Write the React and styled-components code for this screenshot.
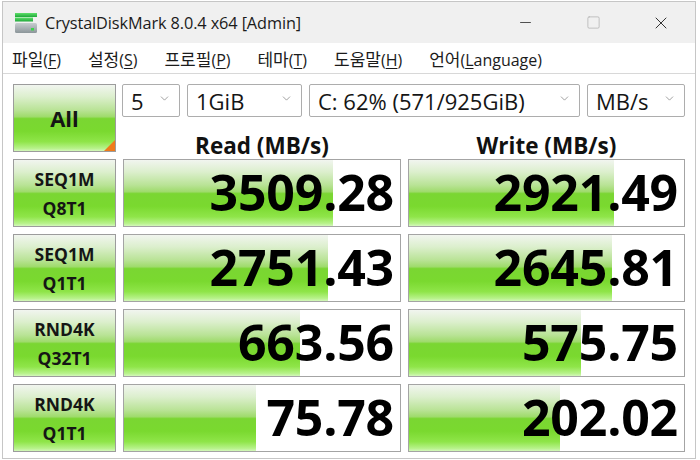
import React from 'react';
import styled, { createGlobalStyle } from 'styled-components';
import { ChevronDown, Minus, Square, X } from 'lucide-react';

const GlobalStyle = createGlobalStyle`
	html, body {
		margin: 0;
		padding: 0;
		background: #ffffff;
	}
	body {
		font-family: 'Open Sans', 'Noto Sans CJK KR', sans-serif;
		color: #111;
	}
`;

const green = `linear-gradient(to bottom,
	#f1f5ef 0%,
	#dcefcd 18%,
	#b9e396 38%,
	#9fdb6c 48%,
	#7ad632 51%,
	#7ad92f 70%,
	#8fe549 86%,
	#b7f28a 96%,
	#d3f7bb 100%)`;

const Window = styled.div`
	box-sizing: border-box;
	width: 694px;
	height: 458px;
	margin: 1px 0 0 2px;
	border: 1px solid #c6c6c6;
	display: flex;
	flex-direction: column;
	overflow: hidden;
`;

const TitleBar = styled.div`
	height: 41px;
	background: #f0f0f0;
	display: flex;
	align-items: center;
	padding-left: 10px;
	font-size: 16.3px;
	color: #1b1b1b;
`;

const TitleText = styled.span`
	margin-left: 6px;
	flex: 1;
	letter-spacing: -0.1px;
`;

const WinButton = styled.div`
	width: 68px;
	height: 40px;
	display: flex;
	align-items: center;
	justify-content: center;
	color: ${(p) => (p.dim ? '#b0b0b0' : '#333')};
`;

const MenuBar = styled.div`
	height: 30px;
	display: flex;
	align-items: center;
	gap: 27px;
	padding-left: 9px;
	border-bottom: 1px solid #d8d8d8;
	background: #fff;
	font-size: 17px;
	color: #1b1b1b;
`;

const MenuItem = styled.span`
	white-space: nowrap;
`;

const Mnemonic = styled.span`
	font-size: 16px;
	u {
		text-underline-offset: 2px;
	}
`;

const Content = styled.div`
	flex: 1;
	padding: 10px 8px 0 10px;
	display: grid;
	grid-template-columns: 103px 278px 277px;
	grid-template-rows: 68px 68px 68px 68px 68px;
	column-gap: 7px;
	row-gap: 7px;
`;

const GreenBox = styled.div`
	box-sizing: border-box;
	border: 1px solid #9c9c9c;
	background: ${green};
	display: flex;
	flex-direction: column;
	align-items: center;
	justify-content: center;
	font-weight: 700;
	color: #151515;
	position: relative;
`;

const AllButton = styled(GreenBox)`
	font-size: 22px;
	&::after {
		content: '';
		position: absolute;
		right: 0;
		bottom: 0;
		border-style: solid;
		border-width: 0 0 11px 11px;
		border-color: transparent transparent #f07a1a transparent;
	}
`;

const TestLabel = styled(GreenBox)`
	font-size: 17.5px;
	line-height: 29px;
	padding-top: 1px;
`;

const TopRight = styled.div`
	grid-column: 2 / 4;
	display: flex;
	flex-direction: column;
`;

const SelectRow = styled.div`
	display: flex;
	gap: 7px;
	margin-left: -1px;
	height: 33px;
`;

const Select = styled.div`
	box-sizing: border-box;
	width: ${(p) => p.w}px;
	height: 33px;
	border: 1px solid #adadad;
	border-radius: 2px;
	background: #fff;
	display: flex;
	align-items: center;
	justify-content: space-between;
	padding: 0 8px 0 8px;
	font-size: 22px;
	color: #151515;
	svg {
		color: #7a7a7a;
		margin-top: -4px;
		flex-shrink: 0;
	}
`;

const HeaderRow = styled.div`
	flex: 1;
	display: grid;
	grid-template-columns: 278px 277px;
	column-gap: 7px;
	align-items: center;
	padding-top: 13px;
`;

const Header = styled.div`
	text-align: center;
	font-weight: 700;
	font-size: 22.5px;
	color: #111;
`;

const ResultBox = styled.div`
	box-sizing: border-box;
	border: 1px solid #a4a4a4;
	background: #fff;
	position: relative;
	display: flex;
	align-items: center;
	justify-content: flex-end;
	overflow: hidden;
`;

const Bar = styled.div`
	position: absolute;
	left: 0;
	top: 0;
	bottom: 0;
	background: ${green};
`;

const Value = styled.span`
	position: relative;
	font-weight: 700;
	font-size: 50px;
	letter-spacing: -0.2px;
	color: #000;
	padding-right: 6px;
	margin-top: -2px;
`;

const DriveIcon = () => (
	<svg width="26" height="24" viewBox="0 0 26 24">
		<defs>
			<linearGradient id="gtop" x1="0" y1="0" x2="0" y2="1">
				<stop offset="0" stopColor="#5fe06a" />
				<stop offset="1" stopColor="#1fa83a" />
			</linearGradient>
			<linearGradient id="gbody" x1="0" y1="0" x2="0" y2="1">
				<stop offset="0" stopColor="#c7cdd0" />
				<stop offset="1" stopColor="#8c969a" />
			</linearGradient>
		</defs>
		<rect x="2" y="2" width="22" height="4" fill="url(#gtop)" />
		<rect x="2" y="6.5" width="18" height="4" fill="url(#gtop)" />
		<rect x="2" y="12" width="22" height="10" rx="1.5" fill="url(#gbody)" />
		<rect x="18" y="17" width="3" height="2.5" fill="#3dd44a" />
	</svg>
);

const menus = [
	['파일', 'F'],
	['설정', 'S'],
	['프로필', 'P'],
	['테마', 'T'],
	['도움말', 'H'],
];

const tests = [
	{ a: 'SEQ1M', b: 'Q8T1', read: 3509.28, write: 2921.49 },
	{ a: 'SEQ1M', b: 'Q1T1', read: 2751.43, write: 2645.81 },
	{ a: 'RND4K', b: 'Q32T1', read: 663.56, write: 575.75 },
	{ a: 'RND4K', b: 'Q1T1', read: 75.78, write: 202.02 },
];

// CrystalDiskMark meter is log scale
const meter = (v) => Math.min(100, ((Math.log10(v) + 1) / 6) * 100);

const Result = ({ value }) => (
	<ResultBox>
		<Bar style={{ width: `${meter(value)}%` }} />
		<Value>{value.toFixed(2)}</Value>
	</ResultBox>
);

const App = () => {
	return (
		<>
			<GlobalStyle />
			<Window>
				<TitleBar>
					<DriveIcon />
					<TitleText>CrystalDiskMark 8.0.4 x64 [Admin]</TitleText>
					<WinButton>
						<Minus size={17} strokeWidth={1.2} />
					</WinButton>
					<WinButton dim>
						<Square size={15} strokeWidth={1.2} />
					</WinButton>
					<WinButton>
						<X size={20} strokeWidth={1.2} />
					</WinButton>
				</TitleBar>
				<MenuBar>
					{menus.map(([k, m]) => (
						<MenuItem key={m}>
							{k}
							<Mnemonic>
								(<u>{m}</u>)
							</Mnemonic>
						</MenuItem>
					))}
					<MenuItem>
						언어
						<Mnemonic>
							(<u>L</u>anguage)
						</Mnemonic>
					</MenuItem>
				</MenuBar>
				<Content>
					<AllButton>All</AllButton>
					<TopRight>
						<SelectRow>
							<Select w={58}>
								5 <ChevronDown size={13} strokeWidth={1.3} />
							</Select>
							<Select w={115}>
								1GiB <ChevronDown size={13} strokeWidth={1.3} />
							</Select>
							<Select w={271}>
								C: 62% (571/925GiB) <ChevronDown size={13} strokeWidth={1.3} />
							</Select>
							<Select w={98}>
								MB/s <ChevronDown size={13} strokeWidth={1.3} />
							</Select>
						</SelectRow>
						<HeaderRow>
							<Header>Read (MB/s)</Header>
							<Header>Write (MB/s)</Header>
						</HeaderRow>
					</TopRight>
					{tests.map((t) => (
						<React.Fragment key={t.a + t.b}>
							<TestLabel>
								<span>{t.a}</span>
								<span>{t.b}</span>
							</TestLabel>
							<Result value={t.read} />
							<Result value={t.write} />
						</React.Fragment>
					))}
				</Content>
			</Window>
		</>
	);
};

export default App;
